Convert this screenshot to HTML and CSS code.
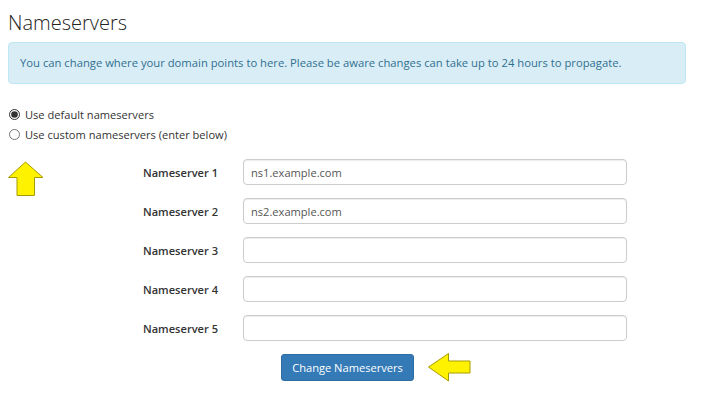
FILE: index.html
```html
<!DOCTYPE html>
<html lang="en">
<head>
    <meta charset="UTF-8">
    <title>Nameservers</title>
    <link rel="stylesheet" href="styles.css">
</head>
<body>

<h2 class="page-title">Nameservers</h2>

<div class="alert-info">
    You can change where your domain points to here. Please be aware changes can take up to 24 hours to propagate.
</div>

<form class="ns-form">
    <div class="radio-group">
        <label class="radio"><input type="radio" name="nschoice" checked> Use default nameservers</label>
        <label class="radio"><input type="radio" name="nschoice"> Use custom nameservers (enter below)</label>
    </div>

    <div class="ns-body">
        <svg class="arrow-up" width="36" height="36" viewBox="0 0 36 36">
            <polygon points="17.5,1 35,16.5 26.5,16.5 26.5,34.5 9,34.5 9,16.5 0.5,16.5" fill="#fff200" stroke="#a89b00" stroke-width="1"/>
        </svg>

        <div class="ns-fields">
            <div class="ns-row">
                <label>Nameserver 1</label>
                <input type="text" value="ns1.example.com">
            </div>
            <div class="ns-row">
                <label>Nameserver 2</label>
                <input type="text" value="ns2.example.com">
            </div>
            <div class="ns-row">
                <label>Nameserver 3</label>
                <input type="text">
            </div>
            <div class="ns-row">
                <label>Nameserver 4</label>
                <input type="text">
            </div>
            <div class="ns-row">
                <label>Nameserver 5</label>
                <input type="text">
            </div>
        </div>
    </div>

    <div class="actions">
        <button type="button">Change Nameservers</button>
        <svg class="arrow-left" width="43" height="29" viewBox="0 0 43 29">
            <polygon points="0.5,14 20.5,0.5 20.5,8 42,8 42,20 20.5,20 20.5,28 " fill="#fff200" stroke="#a89b00" stroke-width="1"/>
        </svg>
    </div>
</form>

</body>
</html>
```

FILE: styles.css
```css
body {
    font-family: 'Open Sans', 'Liberation Sans', sans-serif;
    font-size: 11.1px;
    margin: 0;
    padding: 0 8px;
    background-color: #fff;
    color: #333;
}
.page-title {
    font-family: 'Open Sans', sans-serif;
    font-weight: 300;
    font-size: 20px;
    line-height: 24px;
    margin: 0;
    padding-top: 11px;
    color: #222;
}
.alert-info {
    margin-top: 7px;
    width: 678px;
    box-sizing: border-box;
    padding: 12px 11px;
    background-color: #d9edf7;
    border: 1px solid #bce8f1;
    border-radius: 4px;
    color: #31708f;
    font-size: 11.25px;
    line-height: 16px;
}
.radio-group {
    margin-top: 22px;
    display: flex;
    flex-direction: column;
    gap: 3px;
}
.radio {
    display: flex;
    align-items: center;
    height: 17px;
    color: #333;
}
.radio input {
    margin: 0 5px 0 1px;
    width: 11px;
    height: 11px;
    accent-color: #333;
}
.ns-body {
    display: flex;
    margin-top: 16px;
}
.arrow-up {
    margin-top: 2px;
    flex-shrink: 0;
}
.ns-fields {
    display: flex;
    flex-direction: column;
    gap: 13px;
}
.ns-row {
    display: flex;
    align-items: center;
}
.ns-row label {
    width: 174px;
    text-align: right;
    font-weight: 600;
    margin-right: 25px;
}
.ns-row input {
    width: 384px;
    height: 26px;
    box-sizing: border-box;
    padding: 0 7px;
    border: 1px solid #ccc;
    border-radius: 4px;
    font-family: 'Open Sans', sans-serif;
    font-size: 11.1px;
    color: #555;
    box-shadow: inset 0 1px 1px rgba(0, 0, 0, 0.075);
}
.actions {
    display: flex;
    align-items: center;
    margin-top: 12px;
    padding-left: 273px;
}
button {
    background-color: #337ab7;
    border: 1px solid #2e6da4;
    color: white;
    font-family: 'Open Sans', sans-serif;
    font-size: 11.1px;
    width: 133px;
    height: 27px;
    padding: 0;
    border-radius: 3px;
    cursor: pointer;
}
.arrow-left {
    margin-left: 14px;
}
```
